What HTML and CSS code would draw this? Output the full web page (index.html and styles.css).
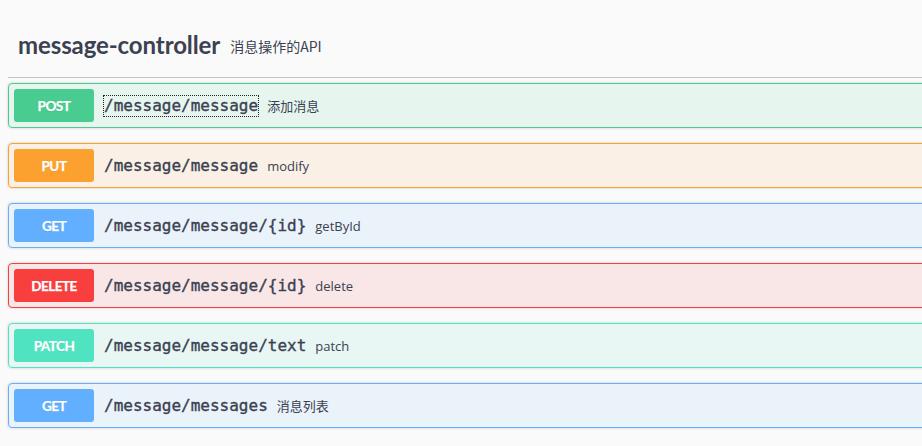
FILE: index.html
```html
<!DOCTYPE html>
<html lang="zh">
<head>
<meta charset="utf-8">
<title>message-controller</title>
<link rel="stylesheet" href="styles.css">
</head>
<body>
<div class="wrap">
  <h4 class="tag">
    <span class="tag-name">message-controller</span>
    <small class="tag-desc">消息操作的API</small>
  </h4>
  <div class="ops">
    <div class="op op-post">
      <span class="method">POST</span>
      <span class="path"><a class="path-link focused">/message/message</a></span>
      <span class="desc">添加消息</span>
    </div>
    <div class="op op-put">
      <span class="method">PUT</span>
      <span class="path"><a class="path-link">/message/message</a></span>
      <span class="desc">modify</span>
    </div>
    <div class="op op-get">
      <span class="method">GET</span>
      <span class="path"><a class="path-link">/message/message/{id}</a></span>
      <span class="desc">getById</span>
    </div>
    <div class="op op-delete">
      <span class="method">DELETE</span>
      <span class="path"><a class="path-link">/message/message/{id}</a></span>
      <span class="desc">delete</span>
    </div>
    <div class="op op-patch">
      <span class="method">PATCH</span>
      <span class="path"><a class="path-link">/message/message/text</a></span>
      <span class="desc">patch</span>
    </div>
    <div class="op op-get">
      <span class="method">GET</span>
      <span class="path"><a class="path-link">/message/messages</a></span>
      <span class="desc">消息列表</span>
    </div>
  </div>
</div>
</body>
</html>
```
FILE: styles.css
```css
html, body {
  margin: 0;
  padding: 0;
  background: #fafafa;
  overflow: hidden;
}
body {
  padding-left: 8px;
  color: #3b4151;
}
.wrap {
  width: 1100px;
}
.tag {
  display: flex;
  align-items: center;
  margin: 12px 0 5px;
  height: 65px;
  padding: 0 20px 0 10px;
  border-bottom: 1px solid rgba(59, 65, 81, 0.3);
  font-family: "Lato", "Open Sans", sans-serif;
  font-weight: 700;
  font-size: 24px;
  color: #3b4151;
}
.tag-name {
  letter-spacing: -0.1px;
}
.tag-desc {
  padding: 2px 10px 0;
  font-family: "Noto Sans CJK SC", "Open Sans", sans-serif;
  font-weight: 400;
  font-size: 14px;
  color: #3b4151;
}
.op {
  display: flex;
  align-items: center;
  margin-bottom: 15px;
  padding: 5px;
  border: 1px solid;
  border-radius: 4px;
  box-shadow: 0 0 3px rgba(0, 0, 0, 0.19);
}
.method {
  box-sizing: border-box;
  width: 80px;
  height: 33px;
  display: flex;
  align-items: center;
  justify-content: center;
  border-radius: 3px;
  font-family: "Lato", sans-serif;
  font-weight: 700;
  font-size: 13.5px;
  letter-spacing: -0.5px;
  color: #fff;
  -webkit-text-stroke: 0.25px #fff;
  text-shadow: 0 1px 0 rgba(0, 0, 0, 0.1);
}
.path {
  padding: 0 10px;
  display: flex;
  align-items: center;
}
.path-link {
  font-family: "DejaVu Sans Mono", monospace;
  font-weight: 400;
  font-size: 16px;
  line-height: 20px;
  color: #3b4151;
  -webkit-text-stroke: 0.35px #3b4151;
}
.focused {
  outline: 1px dotted #222;
}
.desc {
  font-family: "Open Sans", "Noto Sans CJK SC", sans-serif;
  font-size: 13px;
  color: #3b4151;
  margin-left: -1px;
}
.op-post { background: rgba(73, 204, 144, 0.1); border-color: #49cc90; }
.op-post .method { background: #49cc90; }
.op-put { background: rgba(252, 161, 48, 0.1); border-color: #fca130; }
.op-put .method { background: #fca130; }
.op-get { background: rgba(97, 175, 254, 0.1); border-color: #61affe; }
.op-get .method { background: #61affe; }
.op-delete { background: rgba(249, 62, 62, 0.1); border-color: #f93e3e; }
.op-delete .method { background: #f93e3e; }
.op-patch { background: rgba(80, 227, 194, 0.1); border-color: #50e3c2; }
.op-patch .method { background: #50e3c2; }
```
